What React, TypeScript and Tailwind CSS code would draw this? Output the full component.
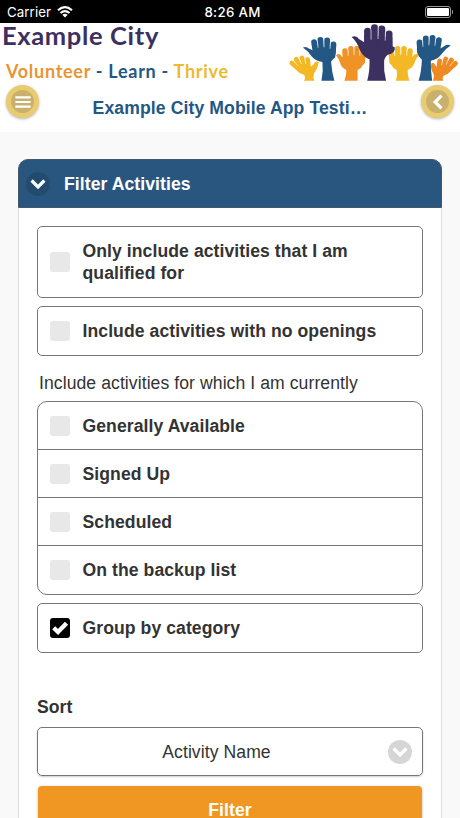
import React from "react";

type HandShape = {
  color: string;
  fingers: [number, number, number, number][];
  width: number;
  palm: string;
};

const hands: HandShape[] = [
  { color: "#235784", width: 18, fingers: [[102, 67, 108, 104], [121, 60, 124, 104], [141, 62, 141, 104], [160, 74, 157, 108]],
    palm: "M68 83 Q78 78 86 86 L99 92 L99 76 L167 84 Q170 108 153 126 Q155 157 163 183 H124 Q130 155 127 127 Q105 122 94 109 Q85 95 68 83Z" },
  { color: "#235784", width: 18, fingers: [[478, 61, 472, 98], [459, 54, 456, 98], [439, 56, 439, 98], [420, 68, 423, 102]],
    palm: "M514 77 Q502 71 493 80 L481 87 L481 70 L413 78 Q408 102 427 120 Q426 155 417 183 H458 Q453 150 454 123 Q475 118 486 103 Q496 88 514 77Z" },
  { color: "#ef9327", width: 17, fingers: [[195, 94, 197, 125], [213, 87, 214, 125], [231, 87, 231, 125], [249, 96, 247, 125]],
    palm: "M168 106 Q178 98 184 109 L190 113 V98 L257 104 Q257 139 233 151 L233 183 H193 Q200 166 199 151 Q184 145 180 129 Q176 115 168 106Z" },
  { color: "#f4b824", width: 17, fingers: [[391, 94, 388, 125], [373, 87, 373, 125], [354, 87, 354, 125], [335, 96, 337, 125]],
    palm: "M418 106 Q408 98 400 109 L395 113 V98 L327 104 Q327 139 351 151 Q354 167 349 183 H389 Q383 166 384 151 Q400 145 405 129 Q409 115 418 106Z" },
  { color: "#3c3061", width: 21, fingers: [[263, 34, 264, 90], [284, 23, 284, 90], [306, 27, 305, 90], [328, 42, 326, 90]],
    palm: "M215 51 Q230 45 237 57 L253 67 V45 L338 52 L339 80 L345 82 Q348 99 324 105 Q313 114 313 126 Q311 155 319 183 H262 Q270 155 269 119 Q248 109 240 91 Q231 64 215 51Z" },
  { color: "#f4b824", width: 15, fingers: [[35, 130, 62, 153], [48, 119, 67, 150], [65, 115, 75, 148], [82, 120, 85, 148]],
    palm: "M116 126 Q104 122 100 134 L92 140 L42 136 Q50 161 71 165 Q78 173 71 183 H102 Q98 170 102 160 Q112 149 116 126Z" },
  { color: "#ee8a22", width: 15, fingers: [[528, 131, 502, 154], [516, 121, 497, 151], [499, 118, 489, 150], [481, 124, 478, 152]],
    palm: "M455 132 Q463 124 468 137 L472 142 L522 138 Q514 161 495 167 Q486 174 492 183 H460 Q466 170 461 160 Q453 150 455 132Z" },
];

function Hands() {
  return (
    <svg viewBox="25 9 512 175" className="mr-[1px] h-[58px] w-[171px] shrink-0" aria-hidden="true">
      {hands.map((hand, i) => (
        <g key={i} fill={hand.color}>
          <path d={hand.palm} />
          {hand.fingers.map(([x1, y1, x2, y2], j) => (
            <line key={j} x1={x1} y1={y1} x2={x2} y2={y2} stroke={hand.color} strokeWidth={hand.width} strokeLinecap="round" />
          ))}
          {hand.fingers.slice(1).map(([x, y, xb, yb], j) => {
            const p = hand.fingers[j];
            const top = { x: (x + p[0]) / 2, y: Math.max(y, p[1]) - 5 };
            const end = { x: (x + p[0] + xb + p[2]) / 4, y: (y + p[1] + yb + p[3]) / 4 };
            return <line key={j} x1={top.x} y1={top.y} x2={end.x} y2={end.y} stroke="#fff" strokeOpacity=".75" strokeWidth="2.5" />;
          })}
        </g>
      ))}
    </svg>
  );
}

function Chevron({ className }: { className: string }) {
  return (
    <svg viewBox="0 0 16 12" className={className} fill="none" stroke="currentColor" strokeWidth="3.2" aria-hidden="true">
      <path d="M1.6 2.5 8 8.9 14.4 2.5" />
    </svg>
  );
}

function Box({ checked = false }: { checked?: boolean }) {
  return (
    <span className={`flex size-5 shrink-0 items-center justify-center rounded-[3px] ${checked ? "bg-black" : "bg-[#e8e8e8]"}`}>
      {checked && (
        <svg viewBox="0 0 20 20" className="size-5" fill="none" stroke="#fff" strokeWidth="4.4" aria-hidden="true">
          <path d="M3.7 9.8 8 14 16.5 5.2" />
        </svg>
      )}
    </span>
  );
}

function Option({ label, checked, className }: { label: string; checked?: boolean; className: string }) {
  return (
    <label className={`flex items-center gap-[12.5px] border-[#777] pl-3 pr-10 font-bold ${className}`}>
      <Box checked={checked} />
      <span>{label}</span>
    </label>
  );
}

const roundButton = "flex size-[33px] shrink-0 items-center justify-center rounded-full border-[5px] border-[#e9cc70] bg-[#c9b06c] text-white shadow-[0_1px_3px_rgba(0,0,0,0.3)]";

export default function App() {
  return (
    <div className="h-[818px] w-[460px] overflow-hidden bg-[#f9f9f9] font-['Liberation_Sans',Arial,sans-serif] text-[17.6px] leading-[22px] tracking-[0.07px] text-[#333]">
      <div className="grid h-[23px] grid-cols-3 items-center bg-black px-[7px] font-[Inter,sans-serif] text-[13.3px] text-white">
        <div className="flex items-center gap-[6px]">
          <span>Carrier</span>
          <svg viewBox="0 0 16 12" className="h-3 w-4" fill="none" stroke="#fff" strokeWidth="2.1" aria-hidden="true">
            <path d="M1 4.3Q8-1.9 15 4.3M3.5 7Q8 3.2 12.5 7" />
            <path d="M5.3 8.8Q8 6.8 10.7 8.8L8 11.6Z" fill="#fff" stroke="none" />
          </svg>
        </div>
        <span className="pl-[5px] text-center font-medium tracking-[0.3px]">8:26 AM</span>
        <div className="flex items-center justify-end gap-[1px]">
          <span className="h-3 w-[26px] rounded-[3px] border border-[#999] p-[1px]"><span className="block h-full rounded-[1px] bg-white" /></span>
          <span className="h-1 w-[1.5px] rounded-r bg-[#999]" />
        </div>
      </div>

      <header className="h-[109px] bg-white">
        <div className="flex h-[61px] justify-between">
          <div className="whitespace-nowrap pl-[2px] font-[Lato,sans-serif] font-bold">
            <div className="text-[25.5px] leading-[25px] tracking-[0.65px] text-[#3c3061]">Example City</div>
            <div className="mt-[12px] pl-[4px] text-[18px] leading-[22px] tracking-[0.72px] text-[#235784]">
              <span className="text-[#e99533]">Volunteer</span> - Learn - <span className="text-[#edb92f]">Thrive</span>
            </div>
          </div>
          <Hands />
        </div>
        <div className="flex items-start justify-between pl-[6px] pr-[6px]">
          <button className={`${roundButton} mt-[1px]`} aria-label="Menu">
            <svg viewBox="0 0 16 12" className="h-3 w-4 shrink-0" stroke="currentColor" strokeWidth="2.2" strokeLinecap="round" aria-hidden="true">
              <path d="M1.2 1.3H14.8M1.2 6H14.8M1.2 10.7H14.8" />
            </svg>
          </button>
          <h1 className="mt-[13px] whitespace-nowrap font-bold tracking-[0.1px] text-[#235784]">Example City Mobile App Testi…</h1>
          <button className={`${roundButton} mt-[1px]`} aria-label="Back">
            <Chevron className="h-3 w-4 shrink-0 rotate-90" />
          </button>
        </div>
      </header>

      <main className="mx-[18px] mt-[27px]">
        <h2 className="flex h-[49px] items-center gap-[14px] rounded-t-[10px] border border-[#44586a] bg-[#28567e] pl-[7px] font-bold text-white">
          <span className="flex size-6 items-center justify-center rounded-full bg-[#234b70]">
            <Chevron className="h-3 w-4" />
          </span>
          Filter Activities
        </h2>
        <div className="border-x border-[#ddd] bg-white px-[18px] pt-[18px]">
          <Option label="Only include activities that I am qualified for" className="h-[72px] rounded-[5px] border" />
          <Option label="Include activities with no openings" className="mt-2 h-[50px] rounded-[5px] border" />
          <div className="mt-4 pl-[2px]">Include activities for which I am currently</div>
          <div className="mt-[7px] rounded-[10px] border border-[#777]">
            <Option label="Generally Available" className="h-12 border-b" />
            <Option label="Signed Up" className="h-12 border-b" />
            <Option label="Scheduled" className="h-12 border-b" />
            <Option label="On the backup list" className="h-12" />
          </div>
          <Option label="Group by category" checked className="mt-2 h-[50px] rounded-[5px] border" />
          <div className="mt-[43px] font-bold">Sort</div>
          <div className="mt-[9px] flex h-[49px] items-center rounded-[5px] border border-[#777] pl-[7px] pr-[10px] shadow-[0_1px_2px_rgba(0,0,0,0.2)]">
            <span className="flex-1 text-center">Activity Name</span>
            <span className="flex size-6 items-center justify-center rounded-full bg-[#d6d6d6] text-white">
              <Chevron className="h-3 w-4" />
            </span>
          </div>
          <button className="mx-[1px] mt-[10px] h-[47px] w-[384px] rounded-[4px] bg-[#f09623] font-bold text-white shadow-[0_1px_3px_rgba(0,0,0,0.3)]">Filter</button>
        </div>
      </main>
    </div>
  );
}
